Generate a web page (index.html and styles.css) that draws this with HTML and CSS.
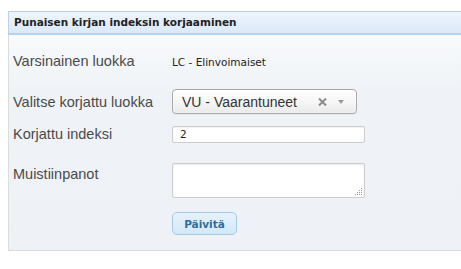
FILE: index.html
```html
<!DOCTYPE html>
<html lang="fi">
<head>
<meta charset="utf-8">
<title>Punaisen kirjan indeksin korjaaminen</title>
<link rel="stylesheet" href="styles.css">
</head>
<body>
<div class="panel">
  <div class="panel-header">Punaisen kirjan indeksin korjaaminen</div>
  <form class="panel-body">
    <div class="row row-first">
      <span class="label">Varsinainen luokka</span>
      <span class="value">LC - Elinvoimaiset</span>
    </div>
    <div class="row row-select">
      <span class="label">Valitse korjattu luokka</span>
      <div class="select">
        <span class="select-text">VU - Vaarantuneet</span>
        <svg class="select-clear" width="9" height="8" viewBox="0 0 9 8"><path d="M1 0.5 L8 7.5 M8 0.5 L1 7.5" stroke="#8a8a8a" stroke-width="2"/></svg>
        <svg class="select-arrow" width="6" height="4" viewBox="0 0 6 4"><path d="M0 0 H6 L3 4 Z" fill="#999"/></svg>
      </div>
    </div>
    <div class="row row-input">
      <span class="label">Korjattu indeksi</span>
      <input class="text-input" type="text" value="2">
    </div>
    <div class="row row-textarea">
      <span class="label label-top">Muistiinpanot</span>
      <div class="textarea-wrap">
        <textarea class="textarea"></textarea>
        <svg class="grip" width="7" height="7" viewBox="0 0 7 7"><g fill="#9a9a9a"><rect x="6" y="0" width="1" height="1"/><rect x="4" y="2" width="1" height="1"/><rect x="6" y="2" width="1" height="1"/><rect x="2" y="4" width="1" height="1"/><rect x="4" y="4" width="1" height="1"/><rect x="6" y="4" width="1" height="1"/><rect x="0" y="6" width="1" height="1"/><rect x="2" y="6" width="1" height="1"/><rect x="4" y="6" width="1" height="1"/><rect x="6" y="6" width="1" height="1"/></g></svg>
      </div>
    </div>
    <div class="row row-button">
      <span class="label"></span>
      <button class="button" type="button">Päivitä</button>
    </div>
  </form>
</div>
</body>
</html>
```
FILE: styles.css
```css
html, body {
  margin: 0;
  padding: 0;
  overflow: hidden;
  background: #ffffff;
}

body {
  width: 461px;
  height: 269px;
}

.panel {
  margin: 11px 0 0 8px;
  border-left: 1px solid #dcdcdc;
  border-bottom: 1px solid #dcdcdc;
  background: linear-gradient(#f9fafc 0px, #f7f9fb 30px, #eff3f7 80px, #eef2f6 100%);
}

.panel-header {
  height: 21px;
  line-height: 21px;
  border-top: 1px solid #b8d2eb;
  border-bottom: 2px solid #b5d0ea;
  margin-left: -1px;
  border-left: 1px solid #b8d2eb;
  padding-left: 5px;
  background: linear-gradient(#eef5fd, #dbe9f8);
  font-family: "DejaVu Sans", Verdana, sans-serif;
  font-weight: bold;
  font-size: 10.5px;
  color: #222;
}

.panel-body {
  display: flex;
  flex-direction: column;
  margin: 0;
  padding: 16px 0 15px 4px;
}

.row {
  display: flex;
  align-items: center;
}

.label {
  width: 159px;
  flex: none;
  font-family: "Liberation Sans", Arial, sans-serif;
  font-size: 14.5px;
  line-height: 18px;
  color: #4a4a4a;
}

.label-top {
  align-self: flex-start;
  margin-top: 2px;
}

.row-first {
  height: 20px;
}

.value {
  font-family: "DejaVu Sans", Verdana, sans-serif;
  font-size: 10.5px;
  color: #222;
  padding-top: 1px;
}

.row-select {
  margin-top: 18px;
}

.select {
  box-sizing: border-box;
  width: 185px;
  height: 25px;
  border: 1px solid #aaa;
  border-radius: 4px;
  background: linear-gradient(#ffffff 0%, #f6f6f6 50%, #eaeaea 100%);
  box-shadow: 0 0 2px #fff inset, 0 1px 0 rgba(0,0,0,0.05);
  display: flex;
  align-items: center;
  padding-left: 9px;
}

.select-text {
  font-family: "Liberation Sans", Arial, sans-serif;
  font-size: 14px;
  color: #333;
  flex: 1;
}

.select-clear {
  margin-right: 11px;
}

.select-arrow {
  margin-right: 12px;
}

.row-input {
  margin-top: 11px;
}

.text-input {
  box-sizing: border-box;
  width: 193px;
  height: 17px;
  margin: 0;
  border: 1px solid #ccc;
  border-radius: 2px;
  box-shadow: inset 0 1px 1px rgba(0,0,0,0.06);
  background: #fff;
  padding: 0 7px;
  font-family: "DejaVu Sans", Verdana, sans-serif;
  font-size: 10.5px;
  color: #222;
  outline: none;
}

.row-textarea {
  margin-top: 20px;
}

.textarea-wrap {
  position: relative;
  width: 193px;
  height: 35px;
}

.textarea {
  box-sizing: border-box;
  width: 193px;
  height: 35px;
  margin: 0;
  border: 1px solid #ccc;
  border-radius: 2px;
  box-shadow: inset 0 1px 2px rgba(0,0,0,0.08);
  background: #fff;
  display: block;
  resize: none;
}

.grip {
  position: absolute;
  right: 3px;
  bottom: 3px;
}

.row-button {
  margin-top: 14px;
}

.button {
  box-sizing: border-box;
  width: 65px;
  height: 23px;
  margin: 0;
  padding: 0;
  border: 1px solid #a6c9e2;
  border-radius: 5px;
  background: linear-gradient(#e6f2fc, #d3e8f9);
  font-family: "DejaVu Sans", Verdana, sans-serif;
  font-weight: bold;
  font-size: 10.5px;
  color: #2e6e9e;
}
```
